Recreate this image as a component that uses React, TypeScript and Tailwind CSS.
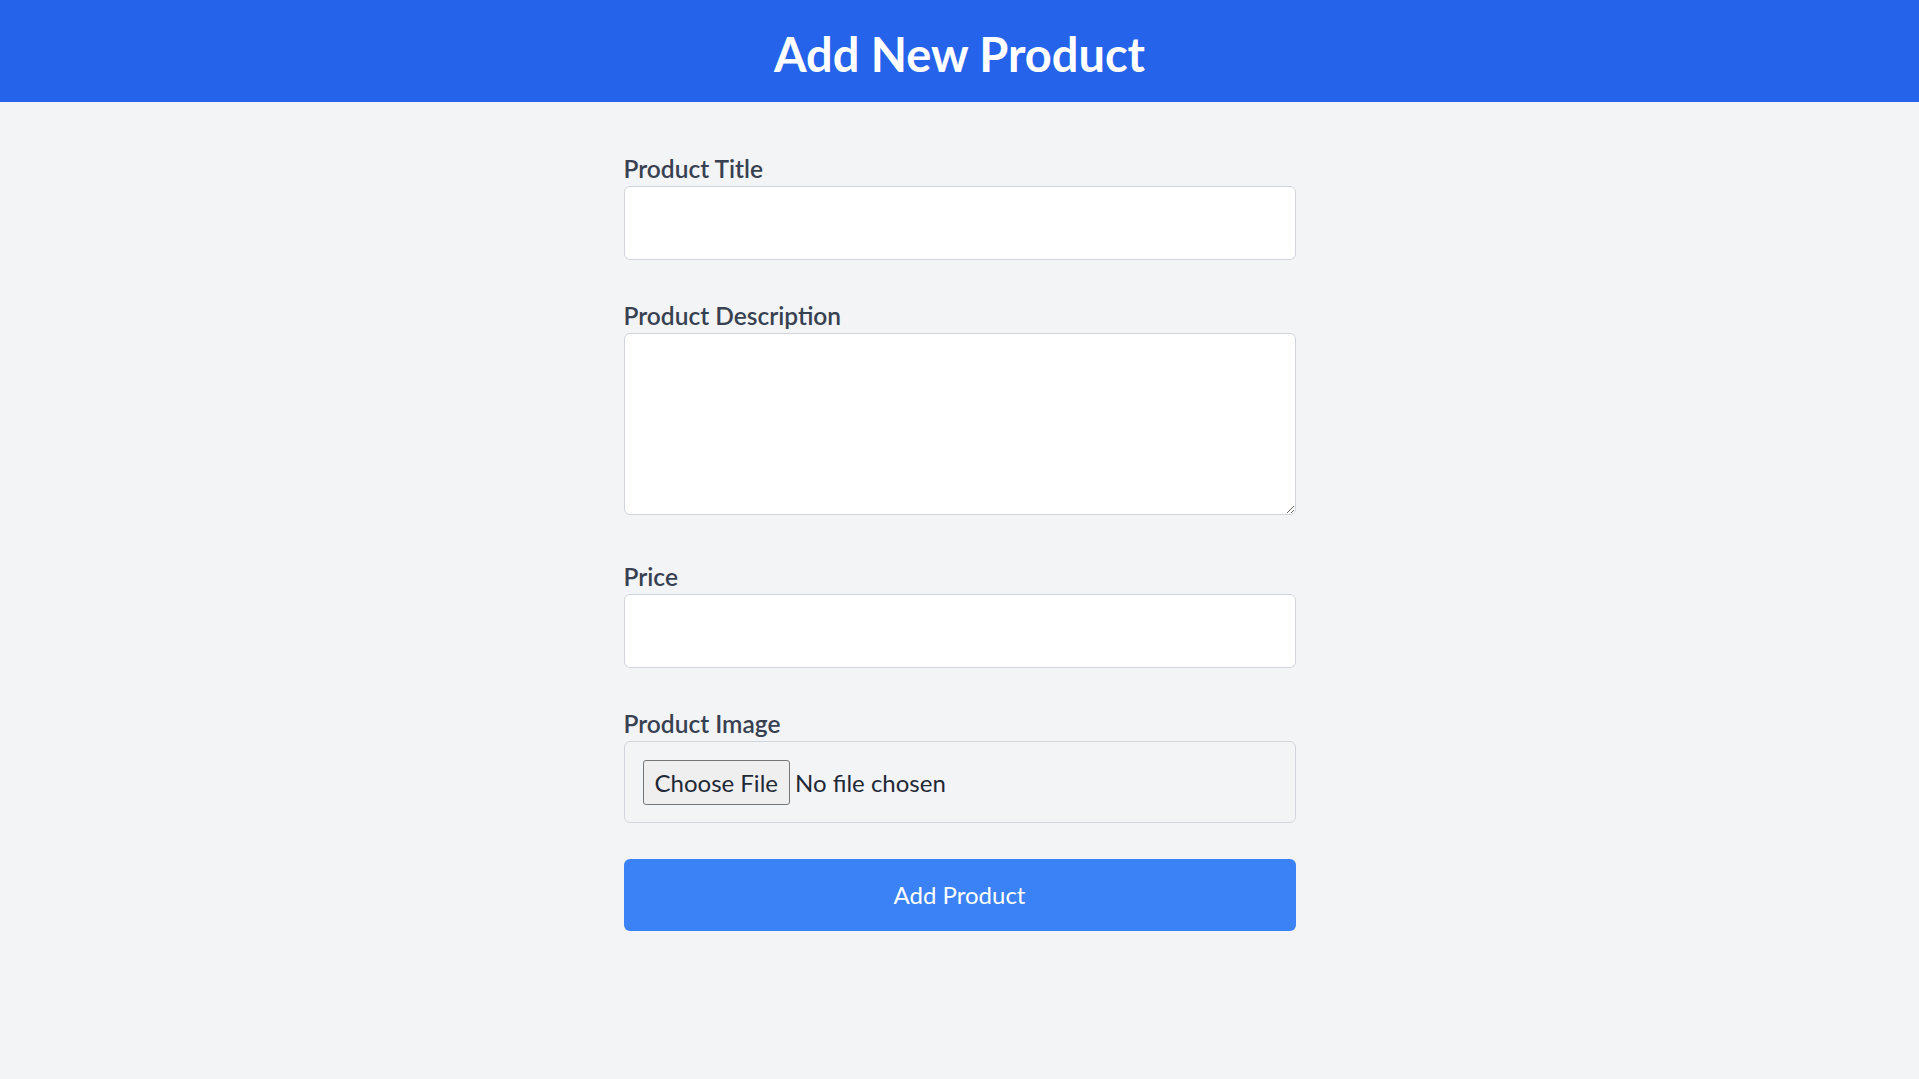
import React from "react";

const font = { fontFamily: "Lato, 'Open Sans', sans-serif" };

function Label({ children }: { children: React.ReactNode }) {
  return (
    <label className="block text-[24.5px] leading-[34px] pt-[2px] font-semibold text-[#374151]">
      {children}
    </label>
  );
}

export default function App() {
  return (
    <div className="min-h-[1079px] bg-[#f3f4f6]" style={font}>
      <header className="h-[102px] bg-[#2563eb] flex items-center justify-center">
        <h1 className="text-[47px] leading-[60px] font-bold text-white pt-[5px]">Add New Product</h1>
      </header>
      <main className="w-[672px] mx-auto pt-[48px]">
        <form className="flex flex-col" onSubmit={(e) => e.preventDefault()}>
          <div className="mb-[37px]">
            <Label>Product Title</Label>
            <input
              type="text"
              className="block w-full h-[74px] bg-white border border-[#d1d5db] rounded-[6px] px-[12px] text-[24px] outline-none"
            />
          </div>
          <div className="mb-[43px]">
            <Label>Product Description</Label>
            <textarea className="block w-full h-[182px] bg-white border border-[#d1d5db] rounded-[6px] p-[12px] text-[24px] outline-none" />
          </div>
          <div className="mb-[37px]">
            <Label>Price</Label>
            <input
              type="number"
              className="block w-full h-[74px] bg-white border border-[#d1d5db] rounded-[6px] px-[12px] text-[24px] outline-none"
            />
          </div>
          <div className="mb-[36px]">
            <Label>Product Image</Label>
            <div className="h-[82px] border border-[#d1d5db] rounded-[6px] px-[18px] flex items-center text-[24px] text-[#374151]">
              <span className="h-[45px] px-[11px] pt-[2px] flex items-center bg-[#efefef] border border-[#767676] rounded-[3px] text-[#1f2937]">
                Choose File
              </span>
              <span className="ml-[5px] pt-[2px] text-[#1f2937]">No file chosen</span>
            </div>
          </div>
          <button
            type="submit"
            className="h-[72px] w-full bg-[#3b82f6] rounded-[6px] text-white text-[24px] flex items-center justify-center"
          >
            Add Product
          </button>
        </form>
      </main>
    </div>
  );
}
